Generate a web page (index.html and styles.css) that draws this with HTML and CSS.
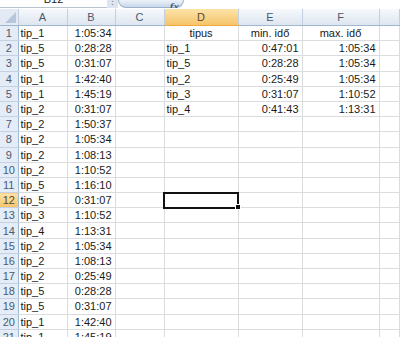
FILE: index.html
```html
<!DOCTYPE html>
<html lang="hu">
<head>
  <meta charset="UTF-8">
  <title>Munkalap</title>
  <link rel="stylesheet" href="styles.css">
</head>
<body>
  <div class="formula-bar">
    <div class="name-box">B12</div>
    <div class="bar-gap">&#8942;</div>
    <div class="fx-pill"><span class="fx">fx</span></div>
    <div class="formula-input"></div>
  </div>

  <table class="sheet">
    <colgroup>
      <col class="c-row"><col class="c-a"><col class="c-b"><col class="c-c">
      <col class="c-d"><col class="c-e"><col class="c-f"><col>
    </colgroup>
    <thead>
      <tr>
        <th class="corner"><span class="tri"></span></th>
        <th>A</th><th>B</th><th>C</th><th class="active">D</th><th>E</th><th>F</th><th></th>
      </tr>
    </thead>
    <tbody>
      <tr><th>1</th><td>tip_1</td><td class="num">1:05:34</td><td></td><td class="ctr">tipus</td><td class="ctr">min. idő</td><td class="ctr">max. idő</td><td></td></tr>
      <tr><th>2</th><td>tip_5</td><td class="num">0:28:28</td><td></td><td>tip_1</td><td class="num">0:47:01</td><td class="num">1:05:34</td><td></td></tr>
      <tr><th>3</th><td>tip_5</td><td class="num">0:31:07</td><td></td><td>tip_5</td><td class="num">0:28:28</td><td class="num">1:05:34</td><td></td></tr>
      <tr><th>4</th><td>tip_1</td><td class="num">1:42:40</td><td></td><td>tip_2</td><td class="num">0:25:49</td><td class="num">1:05:34</td><td></td></tr>
      <tr><th>5</th><td>tip_1</td><td class="num">1:45:19</td><td></td><td>tip_3</td><td class="num">0:31:07</td><td class="num">1:10:52</td><td></td></tr>
      <tr><th>6</th><td>tip_2</td><td class="num">0:31:07</td><td></td><td>tip_4</td><td class="num">0:41:43</td><td class="num">1:13:31</td><td></td></tr>
      <tr><th>7</th><td>tip_2</td><td class="num">1:50:37</td><td></td><td></td><td></td><td></td><td></td></tr>
      <tr><th>8</th><td>tip_2</td><td class="num">1:05:34</td><td></td><td></td><td></td><td></td><td></td></tr>
      <tr><th>9</th><td>tip_2</td><td class="num">1:08:13</td><td></td><td></td><td></td><td></td><td></td></tr>
      <tr><th>10</th><td>tip_2</td><td class="num">1:10:52</td><td></td><td></td><td></td><td></td><td></td></tr>
      <tr><th>11</th><td>tip_5</td><td class="num">1:16:10</td><td></td><td></td><td></td><td></td><td></td></tr>
      <tr><th class="active">12</th><td>tip_5</td><td class="num">0:31:07</td><td></td><td class="selected"><span class="handle"></span></td><td></td><td></td><td></td></tr>
      <tr><th>13</th><td>tip_3</td><td class="num">1:10:52</td><td></td><td></td><td></td><td></td><td></td></tr>
      <tr><th>14</th><td>tip_4</td><td class="num">1:13:31</td><td></td><td></td><td></td><td></td><td></td></tr>
      <tr><th>15</th><td>tip_2</td><td class="num">1:05:34</td><td></td><td></td><td></td><td></td><td></td></tr>
      <tr><th>16</th><td>tip_2</td><td class="num">1:08:13</td><td></td><td></td><td></td><td></td><td></td></tr>
      <tr><th>17</th><td>tip_2</td><td class="num">0:25:49</td><td></td><td></td><td></td><td></td><td></td></tr>
      <tr><th>18</th><td>tip_5</td><td class="num">0:28:28</td><td></td><td></td><td></td><td></td><td></td></tr>
      <tr><th>19</th><td>tip_5</td><td class="num">0:31:07</td><td></td><td></td><td></td><td></td><td></td></tr>
      <tr><th>20</th><td>tip_1</td><td class="num">1:42:40</td><td></td><td></td><td></td><td></td><td></td></tr>
      <tr><th>21</th><td>tip_1</td><td class="num">1:45:19</td><td></td><td></td><td></td><td></td><td></td></tr>
    </tbody>
  </table>
</body>
</html>
```

FILE: styles.css
```css
body {
  margin: 0;
  width: 400px;
  height: 337px;
  overflow: hidden;
  background: #fff;
  font-family: 'Liberation Sans', Arial, sans-serif;
  font-size: 11px;
  color: #1a1a1a;
}
.formula-bar {
  display: flex;
  height: 8px;
  overflow: hidden;
  background: #fff;
}
.name-box {
  width: 107px;
  line-height: 8px;
  margin-top: -5px;
  text-align: center;
  font-size: 11px;
  color: #222;
  border-bottom: 1px solid #b9c3d0;
  box-sizing: border-box;
}
.bar-gap {
  width: 11px;
  background: #dde5f0;
  color: #777;
  font-size: 9px;
  line-height: 4px;
  text-align: center;
}
.fx-pill {
  width: 66px;
  background: linear-gradient(#eef3fa, #c9d7eb);
  border: 1px solid #9fb2cc;
  border-top: none;
  border-radius: 0 0 14px 14px;
  box-sizing: border-box;
  text-align: right;
  padding-right: 4px;
}
.fx {
  font-family: 'Liberation Serif', serif;
  font-style: italic;
  font-weight: bold;
  font-size: 11px;
  line-height: 6px;
  color: #4a5a70;
}
.formula-input {
  flex: 1;
}
.sheet {
  border-collapse: collapse;
  table-layout: fixed;
  width: 400px;
  margin-top: 1px;
}
.c-row { width: 18px; }
.c-a { width: 49px; }
.c-b { width: 48px; }
.c-c { width: 49px; }
.c-d { width: 74px; }
.c-e { width: 64px; }
.c-f { width: 77px; }
thead th {
  height: 16px;
  padding: 0;
  font-weight: normal;
  color: #4c5a6c;
  background: linear-gradient(#f6f9fc, #dde5ef);
  border-right: 1px solid #c3cfdf;
  border-bottom: 1px solid #9eb6ce;
  text-align: center;
}
thead th.active {
  background: linear-gradient(#fbe3a9, #f5c469);
  color: #5a4a30;
  border-bottom-color: #f1a93d;
}
.corner {
  position: relative;
  background: #e3eaf3;
}
.tri {
  position: absolute;
  right: 2px;
  bottom: 2px;
  width: 0;
  height: 0;
  border-left: 11px solid transparent;
  border-bottom: 11px solid #b7c6da;
}
tbody th {
  height: 14.2px;
  padding: 0;
  font-weight: normal;
  color: #4c5a6c;
  background: #e4ecf7;
  border-right: 1px solid #9eb6ce;
  border-bottom: 1px solid #c5d1e0;
  text-align: center;
  line-height: 14px;
}
tbody th.active {
  background: linear-gradient(#fbe3a9, #f5c469);
  color: #5a4a30;
}
td {
  height: 14.2px;
  padding: 0 2px;
  border-right: 1px solid #dadcdf;
  border-bottom: 1px solid #dadcdf;
  white-space: nowrap;
  overflow: hidden;
  line-height: 14px;
}
td.num {
  text-align: right;
  padding-right: 3px;
}
td.ctr {
  text-align: center;
}
td.selected {
  position: relative;
  overflow: visible;
  outline: 2px solid #111;
  outline-offset: -1px;
}
.handle {
  position: absolute;
  right: -3px;
  bottom: -3px;
  width: 4px;
  height: 4px;
  background: #111;
  border: 1px solid #fff;
}
```
